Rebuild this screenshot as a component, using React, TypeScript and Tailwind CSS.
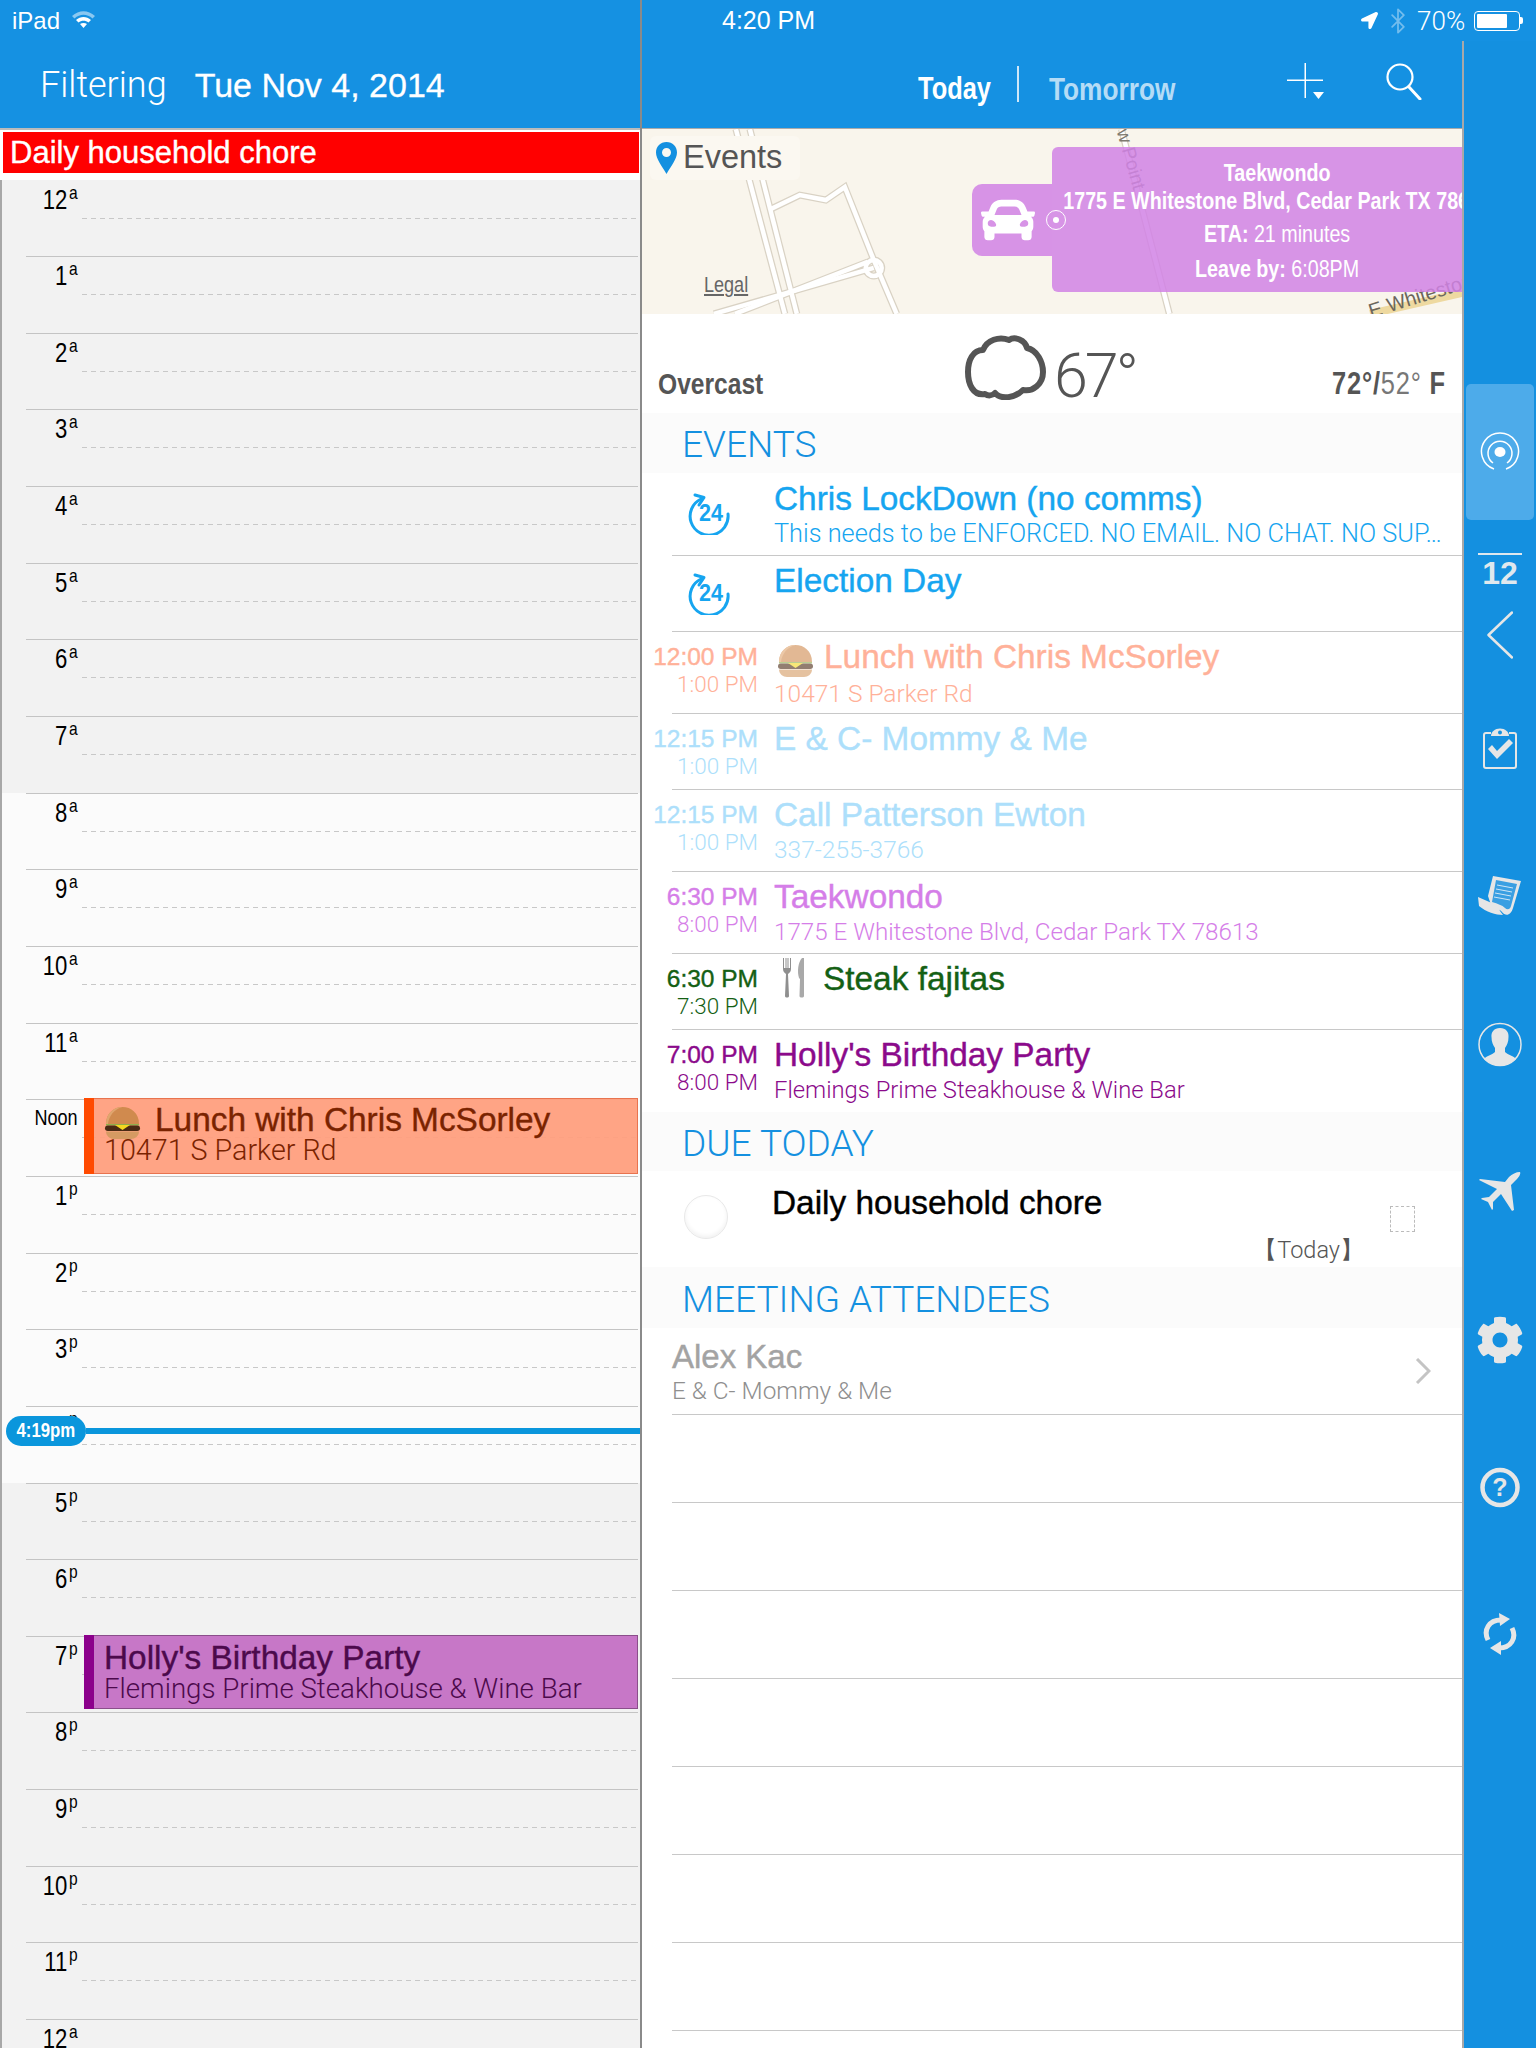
import { FaCar, FaCog, FaLocationArrow } from "react-icons/fa";
import { Bluetooth } from "lucide-react";

const light = "font-['Roboto','Liberation_Sans',sans-serif] font-light";
// condensed look of the iPad app's labels
const condL = "inline-block origin-left scale-x-[0.82] whitespace-nowrap";
const condR = "inline-block origin-right scale-x-[0.82] whitespace-nowrap";
const medium = "[-webkit-text-stroke:0.4px_currentColor]";

const hours = ["12a", "1a", "2a", "3a", "4a", "5a", "6a", "7a", "8a", "9a", "10a", "11a", "Noon", "1p", "2p", "3p", "4p", "5p", "6p", "7p", "8p", "9p", "10p", "11p", "12a"];

// events list on the right
const rows = [
  { h: "h-[83px]", icon: "24", iconTop: "mt-[20px]", title: "Chris LockDown (no comms)", sub: "This needs to be ENFORCED. NO EMAIL. NO CHAT. NO SUP…", subSize: "text-[25.300px]", color: "text-[#16a5f0]" },
  { h: "h-[76px]", icon: "24", iconTop: "mt-[17px]", title: "Election Day", color: "text-[#16a5f0]" },
  { h: "h-[82px]", start: "12:00 PM", end: "1:00 PM", icon: "burger", title: "Lunch with Chris McSorley", sub: "10471 S Parker Rd", subSize: "text-[24.500px]", color: "text-[#ffb199]" },
  { h: "h-[76px]", start: "12:15 PM", end: "1:00 PM", title: "E & C- Mommy & Me", color: "text-[#addffb]" },
  { h: "h-[82px]", start: "12:15 PM", end: "1:00 PM", title: "Call Patterson Ewton", sub: "337-255-3766", subSize: "text-[24.500px]", color: "text-[#addffb]" },
  { h: "h-[82px]", start: "6:30 PM", end: "8:00 PM", title: "Taekwondo", sub: "1775 E Whitestone Blvd, Cedar Park TX 78613", subSize: "text-[24.200px]", color: "text-[#d57ee8]" },
  { h: "h-[76px]", start: "6:30 PM", end: "7:30 PM", icon: "fork", title: "Steak fajitas", color: "text-[#146014]" },
  { h: "h-[82px]", start: "7:00 PM", end: "8:00 PM", title: "Holly's Birthday Party", sub: "Flemings Prime Steakhouse & Wine Bar", subSize: "text-[23.800px]", color: "text-[#8b0a8b]", last: true },
];

function Burger({ className }: { className?: string }) {
  return (
    <svg viewBox="0 0 37 32" className={className}>
      <path d="M2 17C2 6 10 0 18.500 0S35 6 35 17Z" fill="#d08a4e" />
      <path d="M2 17C2 6 10 0 18.500 0C10 2 5 9 4 17Z" fill="#e0a56e" />
      <rect x="2" y="17" width="33" height="1.500" fill="#8fae4a" />
      <rect x="1" y="18.500" width="35" height="5.500" rx="2.750" fill="#4a2a14" />
      <path d="M11 18H26L18.500 23Z" fill="#f4d820" />
      <path d="M2 24.500H35C35 29 31 32 27 32H10C6 32 2 29 2 24.500Z" fill="#d59a62" />
    </svg>
  );
}

function Fork() {
  return (
    <svg viewBox="0 0 24 40" className="mt-[-3px] ml-[8px] h-[40px] w-[24px] shrink-0">
      <path d="M1 0V11C1 14 3 15 4 16L3 38C3 40 7 40 7 38L6 16C7 15 9 14 9 11V0H8V10H6.500V0H5.500V10H4.500V0H3.500V10H2V0Z" fill="#8f8f8f" />
      <path d="M20 0C16 4 15 14 17 20L18 21L17.500 38C17.500 40 22 40 22 38V0Z" fill="#a9a9a9" />
    </svg>
  );
}

function Icon24() {
  return (
    <svg viewBox="0 0 44 42" className="h-[42px] w-[44px]">
      <path d="M15 6A19 19 0 1 0 42 21" fill="none" stroke="#16a5f0" strokeWidth="3" strokeLinecap="round" />
      <path d="M9 2L18 4.500L13 12" fill="none" stroke="#16a5f0" strokeWidth="3" strokeLinecap="round" strokeLinejoin="round" />
      <text x="13" y="28" fontSize="23" fontWeight="700" textLength="24" lengthAdjust="spacingAndGlyphs" fill="#16a5f0" fontFamily="'Liberation Sans',sans-serif">24</text>
    </svg>
  );
}

function Section({ title, h }: { title: string; h: string }) {
  return (
    <div className={`${h} flex items-center bg-[#fbfbfb] pt-[3px] pl-[40px]`}>
      <span className={`${light} text-[37px] leading-none text-[#1490e0]`}>{title}</span>
    </div>
  );
}

function MapArea() {
  return (
    <div className="relative h-[185px] overflow-hidden bg-[#f9f5ec]">
      <svg viewBox="642 129 821 185" className="absolute inset-0 h-full w-full">
        <g fill="none" stroke="#d9d2c4" strokeWidth="7">
          <path d="M736 129L785 314" />
          <path d="M750 129L797 314" />
          <path d="M769 210L800 195L826 200L845 187L874 260L897 314" />
          <path d="M874 268L714 314" />
          <path d="M868 262L735 314" />
          <circle cx="874" cy="268" r="8" />
          <path d="M1122 129L1170 314" />
          <path d="M1371 314L1463 293" stroke="#eed9a0" strokeWidth="8" />
        </g>
        <g fill="none" stroke="#ffffff" strokeWidth="4.500">
          <path d="M736 129L785 314" />
          <path d="M750 129L797 314" />
          <path d="M769 210L800 195L826 200L845 187L874 260L897 314" />
          <path d="M874 268L714 314" />
          <path d="M868 262L735 314" />
          <circle cx="874" cy="268" r="8" />
          <path d="M1122 129L1170 314" />
        </g>
        <text x="1117" y="131" transform="rotate(74 1117 131)" fontSize="19" fill="#7f7a70" fontFamily="'Liberation Sans',sans-serif">w Point</text>
        <text x="1372" y="318" transform="rotate(-17 1372 318)" fontSize="20" fill="#6b665c" fontFamily="'Liberation Sans',sans-serif">E Whitestone</text>
      </svg>
      <div className="absolute top-[7px] left-[8px] flex h-[44px] w-[150px] items-center rounded-[6px] bg-[#fbf8f1] pl-[6px]">
        <svg viewBox="0 0 21 32" className="h-[32px] w-[21px]">
          <path fillRule="evenodd" d="M10.500 0C4.500 0 0 4.500 0 10.500C0 17 6 24 10.500 32C15 24 21 17 21 10.500C21 4.500 16.500 0 10.500 0ZM10.500 6A4.500 4.500 0 1 1 10.500 15A4.500 4.500 0 0 1 10.500 6Z" fill="#1490e0" />
        </svg>
        <span className="-mt-[2px] ml-[6px] text-[32.500px] leading-none text-[#555]">Events</span>
      </div>
      <span className={`${condL} absolute top-[144px] left-[62px] text-[22px] leading-[24px] text-[#666] underline`}>Legal</span>
      <div className="absolute top-[55px] left-[330px] flex h-[72px] w-[80px] items-center rounded-l-[10px] bg-[#d793e6] pl-[9px]">
        <FaCar className="h-[54px] w-[54px] text-white" />
      </div>
      <div className="absolute top-[18px] left-[410px] h-[145px] w-[411px] overflow-hidden rounded-l-[6px] bg-[#d182e5]/85 text-white">
        <div className="flex w-[549px] origin-left scale-x-[0.82] flex-col items-center text-[24px] leading-[24px] font-bold whitespace-nowrap">
          <span className="mt-[14px]">Taekwondo</span>
          <span className="mt-[4px]">1775 E Whitestone Blvd, Cedar Park TX 78613</span>
          <span className="mt-[9px]">ETA: <span className="font-normal">21 minutes</span></span>
          <span className="mt-[11px]">Leave by: <span className="font-normal">6:08PM</span></span>
        </div>
      </div>
      <svg viewBox="0 0 22 22" className="absolute top-[80px] left-[403px] h-[22px] w-[22px]">
        <circle cx="11" cy="11" r="9.500" fill="none" stroke="#fff" strokeWidth="1" />
        <circle cx="11" cy="11" r="3" fill="#fff" />
      </svg>
    </div>
  );
}

function Sidebar() {
  return (
    <div className="flex w-[72px] shrink-0 flex-col items-center bg-[#1490e0] text-[#e6e6e6]">
      <div className="mt-[343px] flex h-[136px] w-[68px] items-center justify-center rounded-[5px] bg-[#4dabea]">
        <svg viewBox="0 0 40 40" className="h-[40px] w-[40px]" fill="none" stroke="#fff" strokeWidth="1.500">
          <path d="M14 37A18.500 18.500 0 1 1 26 37" />
          <path d="M13 31A12 12 0 1 1 27 31" />
          <ellipse cx="20" cy="20" rx="5.500" ry="5" fill="#fff" stroke="none" />
        </svg>
      </div>
      <div className="mt-[33px] h-[2px] w-[44px] bg-[#dfe8ee]" />
      <div className="mt-[2px] text-[32px] leading-[32px] font-bold text-[#dfe8ee]">12</div>
      <svg viewBox="0 0 26 48" className="mt-[22px] h-[48px] w-[26px]" fill="none" stroke="#e6e6e6" strokeWidth="2.500" strokeLinecap="round" strokeLinejoin="round">
        <path d="M25 1.500L1.500 24L25 46.500" />
      </svg>
      <svg viewBox="0 0 34 41" className="mt-[69px] h-[41px] w-[34px]">
        <path d="M8 5H3C1.500 5 1 6 1 7V38C1 39.500 2 40 3 40H31C32.500 40 33 39 33 38V7C33 6 32.500 5 31 5H26" fill="none" stroke="#e6e6e6" strokeWidth="2" />
        <path d="M8 8C8 4 12 0.500 17 0.500S26 4 26 8Z" fill="#e6e6e6" />
        <circle cx="17" cy="4.500" r="2" fill="#1490e0" />
        <path d="M5 21L9 17L14 23L26 11L30 15L14 31Z" fill="#e6e6e6" />
      </svg>
      <svg viewBox="0 0 44 41" className="mt-[106px] h-[41px] w-[44px]">
        <path d="M15 1L43 6L35 33C33 40 28 42 24 37C22 34 18 34 14 33L10 21Z" fill="#e6e6e6" />
        <path d="M0 22L16 29C20 30 21 33 22 36L25 40C18 40 8 37 1 31Z" fill="#e6e6e6" />
        <path d="M18 5L39 9L33 31C32 35 29 35 27 33C24 30 20 29 14 27Z" fill="#3a9fe2" />
        <path d="M19 10L35 13M18 14L34 17M17 18L33 21M16 22L32 25" stroke="#cfe6f6" strokeWidth="1" />
      </svg>
      <svg viewBox="0 0 44 45" className="mt-[106px] h-[45px] w-[44px]">
        <circle cx="22" cy="22.500" r="21" fill="none" stroke="#e6e6e6" strokeWidth="1.500" />
        <path d="M22 6C16 6 13 10 13.500 15C13.500 20 15 23 17 26V30C14 33 8 34 6 37C10 41 16 43.500 22 43.500S34 41 38 37C36 34 30 33 27 30V26C29 23 30.500 20 30.500 15C31 10 28 6 22 6Z" fill="#e6e6e6" />
      </svg>
      <svg viewBox="0 0 42 41" className="mt-[104px] h-[41px] w-[42px]">
        <path d="M41 1C37 1 33 3 30 6L26 11L1 8L0 9L18 18L10 26L3 27L2 28L9 31L13 39L14 38L14 31L22 23L33 40L35 39L32 14L37 9C40 6 42 3 41 1Z" fill="#e6e6e6" />
      </svg>
      <FaCog className="mt-[104px] h-[48px] w-[48px] text-[#e6e6e6]" />
      <svg viewBox="0 0 40 41" className="mt-[103px] h-[41px] w-[40px]">
        <circle cx="20" cy="20.500" r="17.500" fill="none" stroke="#e6e6e6" strokeWidth="4.500" />
        <text x="20" y="29" textAnchor="middle" fontSize="25" fontWeight="700" fill="#e6e6e6" fontFamily="'Liberation Sans',sans-serif">?</text>
      </svg>
      <svg viewBox="0 0 34 44" className="mt-[104px] h-[44px] w-[34px]" fill="none">
        <path d="M5 28C0 18 6 8 18 8" stroke="#e6e6e6" strokeWidth="5" />
        <path d="M16 1L27 7L17 14Z" fill="#e6e6e6" />
        <path d="M29 16C34 26 28 36 16 36" stroke="#e6e6e6" strokeWidth="5" />
        <path d="M18 29L7 36L18 43Z" fill="#e6e6e6" />
      </svg>
    </div>
  );
}

function DayRail() {
  return (
    <div className="border-l-2 border-[#a8a8a8]">
      {hours.map((label, i) => {
        const num = label.replace(/[ap]$/, "");
        const suffix = label === "Noon" ? "" : label.slice(-1);
        const shaded = i < 8 || i >= 17;
        return (
          <div key={i} className={`relative pl-[24px] ${i === 0 ? "h-[76px]" : "h-[76.670px]"} ${shaded ? "bg-[#f2f2f2]" : "bg-[#fbfbfb]"}`}>
            <div className={`flex h-full w-[612px] ${i === 0 ? "" : "border-t border-[#c4c4c4]"}`}>
              <div className={`flex w-[52px] justify-end text-black ${i === 0 ? "pt-[7px]" : "pt-[6px]"}`}>
                {label === "Noon" ? (
                  <span className={`${condR} -mt-[1px] text-[22px] leading-[26px]`}>Noon</span>
                ) : (
                  <span className="flex origin-right scale-x-[0.82] items-start whitespace-nowrap">
                    <span className="text-[27px] leading-[26px]">{num}</span>
                    <span className="-mt-[3px] ml-[2px] text-[19px] leading-[18px]">{suffix}</span>
                  </span>
                )}
              </div>
              <div className={`ml-[4px] flex-1 ${i === 0 ? "h-[39px]" : "h-[38px]"}`}>
                <div className="h-full bg-[repeating-linear-gradient(90deg,#c8c8c8_0,#c8c8c8_5px,transparent_5px,transparent_9px)] bg-[length:100%_1px] bg-bottom bg-no-repeat" />
              </div>
            </div>
            {label === "Noon" && (
              <div className="absolute top-[-1px] left-[82px] flex h-[76px] w-[554px] border border-[#e8734f] bg-[#ff9f7e]/95">
                <div className="-my-px -ml-px w-[10px] bg-[#ff4a00]" />
                <div className="min-w-0 flex-1 pl-[10px]">
                  <div className="flex items-center">
                    <Burger className="mt-[7px] h-[32px] w-[37px]" />
                    <span className={`${medium} mt-[2px] ml-[14px] text-[33.400px] leading-[38px] text-[#7a2300]`}>Lunch with Chris McSorley</span>
                  </div>
                  <div className={`${light} -mt-[4px] text-[28.700px] leading-[30px] text-[#7a2300]`}>10471 S Parker Rd</div>
                </div>
              </div>
            )}
            {i === 19 && (
              <div className="absolute top-[-1px] left-[82px] flex h-[74px] w-[554px] border border-[#8b4f8b] bg-[#c777c7]">
                <div className="-my-px -ml-px w-[10px] bg-[#8b008b]" />
                <div className="min-w-0 flex-1 pl-[10px]">
                  <div className={`${medium} mt-[3px] text-[33.400px] leading-[38px] text-[#4c0a4c]`}>Holly's Birthday Party</div>
                  <div className={`${light} -mt-[3px] text-[27.700px] leading-[30px] text-[#4c0a4c]`}>Flemings Prime Steakhouse &amp; Wine Bar</div>
                </div>
              </div>
            )}
            {label === "4p" && (
              <div className="absolute top-[10px] left-[4px] flex w-[634px] items-center">
                <div className="flex h-[30px] w-[80px] items-center justify-center rounded-full bg-[#0a96dc] text-white">
                  <span className="inline-block scale-x-[0.82] text-[20.500px] font-bold whitespace-nowrap">4:19pm</span>
                </div>
                <div className="h-[6px] flex-1 bg-[#0a96dc]" />
              </div>
            )}
          </div>
        );
      })}
    </div>
  );
}

export default function App() {
  return (
    <div className="flex h-[2048px] w-[1536px] overflow-hidden bg-white font-['Liberation_Sans',Arial,sans-serif]">
      {/* left pane */}
      <div className="w-[642px] shrink-0 overflow-hidden border-r-2 border-[#8a8a8a]">
        <div className="h-[128px] bg-[#1591e2] text-white">
          <div className="flex h-[41px] items-center pl-[12px]">
            <span className="text-[24px] leading-none">iPad</span>
            <svg viewBox="0 0 25 18" className="mt-[-4px] ml-[11px] h-[18px] w-[25px]">
              <path d="M1 6C8 -0.500 17 -0.500 24 6L21.500 8.500C16 3.500 9 3.500 3.500 8.500Z" fill="#fff" opacity="0.5" />
              <path d="M5 10C9.500 6 15.500 6 20 10L17.500 12.500C14.500 10 10.500 10 7.500 12.500Z" fill="#fff" />
              <path d="M9 14C11 12.500 14 12.500 16 14L12.500 18Z" fill="#fff" />
            </svg>
          </div>
          <div className="flex items-center pt-[24px] pl-[40px]">
            <span className={`${light} text-[36px] leading-[40px]`}>Filtering</span>
            <span className="ml-[28px] text-[34px] leading-[40px] [-webkit-text-stroke:0.3px_currentColor]">Tue Nov 4, 2014</span>
          </div>
        </div>
        <div className="h-[2px] bg-[#bbbbbb]" />
        <div className="h-[50px] bg-white pt-[2px] pl-[3px]">
          <div className={`${medium} flex h-[41px] w-[636px] items-center bg-[#ff0000] pl-[7px] text-[31px] leading-none text-white`}>Daily household chore</div>
        </div>
        <DayRail />
      </div>

      {/* right pane */}
      <div className="flex min-w-0 flex-1 flex-col">
        <div className="flex h-[41px] shrink-0 items-center bg-[#1591e2] pl-[80px] text-white">
          <span className="text-[25px] leading-none">4:20 PM</span>
          <FaLocationArrow className="ml-[546px] h-[17px] w-[17px]" />
          <Bluetooth className="ml-[6px] h-[28px] w-[28px] opacity-40" strokeWidth={1.500} />
          <span className={`${light} ml-[5px] text-[26px] leading-none`}>70%</span>
          <div className="ml-[9px] flex h-[20px] w-[46px] items-center rounded-[4px] border border-white p-[2px]">
            <div className="h-full w-[30px] rounded-[1px] bg-white" />
          </div>
          <div className="h-[7px] w-[3px] rounded-r-[2px] bg-white" />
        </div>
        <div className="flex min-h-0 flex-1">
          <div className="w-[822px] shrink-0 border-r-2 border-[#a8a8a8]">
            <div className="flex h-[87px] bg-[#1591e2] pl-[276px]">
              <span className={`${condL} mt-[28px] w-[74px] text-[31px] leading-[40px] font-bold text-white`}>Today</span>
              <div className="mt-[25px] ml-[25px] h-[36px] w-[2px] bg-[#cfe7f8]" />
              <span className={`${condL} mt-[28px] ml-[30px] w-[127px] text-[32px] leading-[40px] font-bold text-[#b5dcf6]`}>Tomorrow</span>
              <svg viewBox="0 0 38 36" className="mt-[22px] ml-[111px] h-[36px] w-[38px]">
                <path d="M17.500 0H19V16.500H36V18H19V35H17.500V18H0V16.500H17.500Z" fill="#fff" />
                <path d="M26 29H37L31.500 36Z" fill="#fff" />
              </svg>
              <svg viewBox="0 0 36 37" className="mt-[22px] ml-[61px] h-[37px] w-[36px]" fill="none" stroke="#fff" strokeWidth="2.200" strokeLinecap="round">
                <circle cx="14" cy="14" r="12.500" />
                <path d="M23 24L34 36" strokeWidth="3" />
              </svg>
            </div>
            <div className="h-px bg-[#aaaaaa]" />
            <MapArea />
            <div className="flex h-[99px] bg-white pr-[16px] pl-[16px]">
              <div className="mt-[53px] w-[307px] text-[#555]">
                <span className={`${condL} text-[30px] leading-[34px] font-bold`}>Overcast</span>
              </div>
              <svg viewBox="0 0 81 66" className="mt-[20px] h-[66px] w-[81px]">
                <path d="M20 60C8 62 3 50 3 38C3 26 8 16 18 16C22 6 34 2 44 6C50 2 60 6 62 14C72 16 78 28 78 38C78 50 68 58 58 56C50 64 36 66 30 59C27 62 23 62 20 60Z" fill="none" stroke="#555" strokeWidth="6" strokeLinejoin="round" />
              </svg>
              <span className={`${light} mt-[26px] ml-[8px] text-[61px] leading-[72px] tracking-[-3px] text-[#555]`}>67°</span>
              <div className="mt-[53px] ml-auto text-[#555]">
                <span className={`${condR} text-[31px] leading-[34px] font-bold tracking-[1px]`}>
                  72°/<span className="font-normal text-[#777]">52°</span> F
                </span>
              </div>
            </div>
            <Section title="EVENTS" h="h-[60px]" />
            {rows.map((r, i) => (
              <div key={i} className={`${r.h} flex flex-col`}>
                <div className={`flex min-h-0 flex-1 ${r.color}`}>
                  <div className="w-[116px] shrink-0 text-right">
                    {r.icon === "24" ? (
                      <div className={`ml-[44px] text-left ${r.iconTop}`}><Icon24 /></div>
                    ) : (
                      <div className="pt-[10.500px]">
                        <div className={`${medium} text-[24.500px] leading-[27px]`}>{r.start}</div>
                        <div className={`${light} text-[22.500px] leading-[28px]`}>{r.end}</div>
                      </div>
                    )}
                  </div>
                  <div className={`ml-[16px] min-w-0 flex-1 ${i === 0 ? "pt-[8px]" : "pt-[7px]"}`}>
                    <div className="flex">
                      {r.icon === "burger" && <Burger className="mt-[6px] mr-[10px] ml-[3px] h-[32px] w-[37px] opacity-60" />}
                      {r.icon === "fork" && <><Fork /><span className="w-[17px]" /></>}
                      <span className={`${medium} text-[33.400px] leading-[36px] whitespace-nowrap`}>{r.title}</span>
                    </div>
                    {r.sub && <div className={`${light} ${r.subSize} mt-[3px] leading-[28px] whitespace-nowrap`}>{r.sub}</div>}
                  </div>
                </div>
                {!r.last && <div className="ml-[30px] h-px bg-[#c8c8c8]" />}
              </div>
            ))}
            <Section title="DUE TODAY" h="h-[59px]" />
            <div className="flex h-[96px]">
              <div className="mt-[24px] ml-[42px] h-[44px] w-[44px] shrink-0 rounded-full border border-[#e8e8e8] shadow-[inset_0_-2px_4px_rgba(0,0,0,0.06)]" />
              <div className="ml-[44px] w-[592px] shrink-0">
                <div className={`${medium} mt-[14px] text-[33.400px] leading-[36px] text-black`}>Daily household chore</div>
                <div className={`${light} mt-[14px] text-right text-[23.500px] leading-[30px] text-[#555]`}>【Today】</div>
              </div>
              <div className="mt-[35px] ml-[26px] h-[26px] w-[25px] border border-dashed border-[#bbbbbb]" />
            </div>
            <Section title="MEETING ATTENDEES" h="h-[61px]" />
            <div className="ml-[30px] flex h-[87px] items-center justify-between border-b border-[#c8c8c8] pr-[31px]">
              <div>
                <div className={`${medium} mt-[2px] text-[33px] leading-[36px] text-[#a3a3a3]`}>Alex Kac</div>
                <div className={`${light} mt-[1px] text-[24.400px] leading-[30px] text-[#8f8f8f]`}>E &amp; C- Mommy &amp; Me</div>
              </div>
              <svg viewBox="0 0 16 26" className="h-[26px] w-[16px]" fill="none" stroke="#c4c4c4" strokeWidth="3">
                <path d="M2 1L14 13L2 25" />
              </svg>
            </div>
            {[0, 1, 2, 3, 4, 5, 6].map((n) => (
              <div key={n} className="ml-[30px] h-[88px] border-b border-[#c8c8c8]" />
            ))}
          </div>
          <Sidebar />
        </div>
      </div>
    </div>
  );
}
